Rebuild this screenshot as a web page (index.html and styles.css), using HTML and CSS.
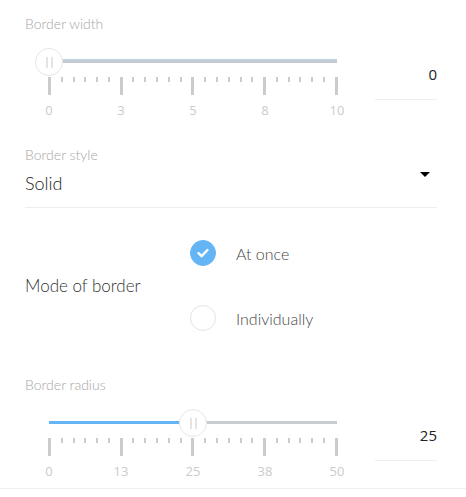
FILE: index.html
```html
<!DOCTYPE html>
<html>
<head>
    <link rel="stylesheet" href="styles.css">
</head>
<body>
    <div class="panel">
        <div class="field first">
            <div class="field-label">Border width</div>
            <div class="slider-row">
                <div class="slider">
                    <div class="track">
                        <div class="rail plain"><div class="fill" style="width:0%"></div></div>
                        <div class="thumb" style="left:0%"><i></i><i></i></div>
                    </div>
                    <div class="ticks">
                        <span class="major"></span><span></span><span></span><span></span><span></span><span></span>
                        <span class="major"></span><span></span><span></span><span></span><span></span><span></span>
                        <span class="major"></span><span></span><span></span><span></span><span></span><span></span>
                        <span class="major"></span><span></span><span></span><span></span><span></span><span></span>
                        <span class="major"></span>
                    </div>
                    <div class="marks"><span>0</span><span>3</span><span>5</span><span>8</span><span>10</span></div>
                </div>
                <div class="value">0</div>
            </div>
        </div>

        <div class="field style-field">
            <div class="field-label">Border style</div>
            <div class="select">
                <span>Solid</span>
                <span class="caret"></span>
            </div>
        </div>

        <div class="field mode-field">
            <div class="mode-label">Mode of border</div>
            <div class="radios">
                <div class="radio checked">
                    <span class="dot">
                        <svg width="14" height="14" viewBox="0 0 14 14"><path d="M2.5 7.2 L5.6 10.2 L11.5 4" fill="none" stroke="#fff" stroke-width="2.4" stroke-linecap="round" stroke-linejoin="round"/></svg>
                    </span>
                    <span>At once</span>
                </div>
                <div class="radio">
                    <span class="dot"></span>
                    <span>Individually</span>
                </div>
            </div>
        </div>

        <div class="field radius-field">
            <div class="field-label">Border radius</div>
            <div class="slider-row">
                <div class="slider">
                    <div class="track">
                        <div class="rail"><div class="fill" style="width:50%"></div></div>
                        <div class="thumb" style="left:50%"><i></i><i></i></div>
                    </div>
                    <div class="ticks">
                        <span class="major"></span><span></span><span></span><span></span><span></span><span></span>
                        <span class="major"></span><span></span><span></span><span></span><span></span><span></span>
                        <span class="major"></span><span></span><span></span><span></span><span></span><span></span>
                        <span class="major"></span><span></span><span></span><span></span><span></span><span></span>
                        <span class="major"></span>
                    </div>
                    <div class="marks"><span>0</span><span>13</span><span>25</span><span>38</span><span>50</span></div>
                </div>
                <div class="value">25</div>
            </div>
        </div>
    </div>
</body>
</html>
```

FILE: styles.css
```css
body {
    margin: 0;
    font-family: Lato, "Open Sans", sans-serif;
    font-weight: 300;
    color: #333;
    background: #fff;
}
.panel {
    border-bottom: 1px solid #f0f0f0;
    padding-bottom: 9px;
}
.field {
    padding: 0 29px 0 25px;
}
.first {
    padding-top: 16px;
}
.field-label {
    font-size: 14px;
    line-height: 16px;
    color: #a6a6a6;
}
.slider-row {
    display: flex;
    margin-top: 16px;
}
.slider {
    width: 288px;
    margin-left: 24px;
}
.track {
    position: relative;
    height: 28px;
}
.rail {
    position: relative;
    top: 12px;
    height: 3px;
    background: #c8cbcf;
}
.rail.plain {
    background: #c4cacf;
    border-top: 1px solid #b8d4ea;
    height: 3px;
    top: 11px;
}
.fill {
    height: 100%;
    background: #64b5f6;
}
.thumb {
    position: absolute;
    top: 0;
    width: 26px;
    height: 26px;
    margin-left: -14px;
    border: 1px solid #e6e6e6;
    border-radius: 50%;
    background: #fff;
    display: flex;
    justify-content: center;
    align-items: center;
    gap: 3px;
}
.thumb i {
    width: 2px;
    height: 11px;
    background: #e4e4e4;
}
.ticks {
    display: flex;
    justify-content: space-between;
    align-items: flex-start;
    height: 18px;
    margin: 1px -1px 0;
}
.ticks span {
    width: 2px;
    height: 5px;
    background: #cbcbcb;
}
.ticks span.major {
    width: 3px;
    height: 18px;
}
.marks {
    display: flex;
    justify-content: space-between;
    margin: 7px -12px 0;
    font-family: "Open Sans", sans-serif;
    font-weight: 400;
    font-size: 13px;
    line-height: 16px;
    color: #cbcbcb;
}
.marks span {
    width: 24px;
    text-align: center;
}
.value {
    width: 62px;
    margin-left: auto;
    margin-top: 16px;
    align-self: flex-start;
    text-align: right;
    font-family: "Open Sans", sans-serif;
    font-weight: 400;
    font-size: 15px;
    line-height: 20px;
    padding-bottom: 15px;
    border-bottom: 1px solid #eee;
    color: #222;
}
.style-field {
    margin-top: 29px;
}
.select {
    display: flex;
    justify-content: space-between;
    margin-top: 8px;
    font-size: 18px;
    line-height: 24px;
    padding-bottom: 12px;
    border-bottom: 1px solid #eee;
    color: #222;
}
.caret {
    width: 0;
    height: 0;
    margin: 1px 7px 0 0;
    border-left: 5px solid transparent;
    border-right: 5px solid transparent;
    border-top: 5px solid #000;
}
.mode-field {
    display: flex;
    align-items: center;
    margin-top: 32px;
}
.mode-label {
    width: 165px;
    font-size: 17px;
    color: #333;
}
.radios {
    display: flex;
    flex-direction: column;
    gap: 39px;
}
.radio {
    display: flex;
    align-items: center;
    gap: 20px;
    height: 26px;
    font-size: 16px;
    color: #444;
}
.dot {
    width: 24px;
    height: 24px;
    border: 1px solid #e4e4e4;
    border-radius: 50%;
    display: flex;
    justify-content: center;
    align-items: center;
}
.radio.checked .dot {
    background: #64b5f6;
    border-color: #64b5f6;
}
.radius-field {
    margin-top: 46px;
}
```
